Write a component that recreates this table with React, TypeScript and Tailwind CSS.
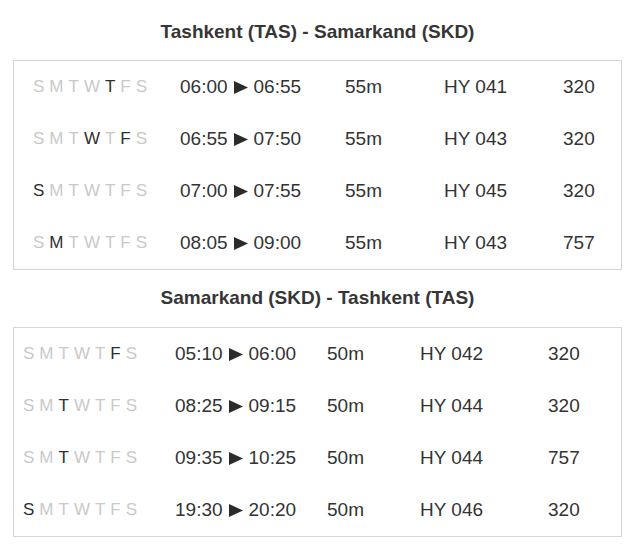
import React from "react";

type Row = { days: boolean[]; dep: string; arr: string; dur: string; flight: string; ac: string };

const DAYS = ["S", "M", "T", "W", "T", "F", "S"];

const mk = (s: string) => DAYS.map((_, i) => s.includes(String(i)));

const out: Row[] = [
  { days: mk("4"), dep: "06:00", arr: "06:55", dur: "55m", flight: "HY 041", ac: "320" },
  { days: mk("35"), dep: "06:55", arr: "07:50", dur: "55m", flight: "HY 043", ac: "320" },
  { days: mk("0"), dep: "07:00", arr: "07:55", dur: "55m", flight: "HY 045", ac: "320" },
  { days: mk("1"), dep: "08:05", arr: "09:00", dur: "55m", flight: "HY 043", ac: "757" },
];

const back: Row[] = [
  { days: mk("5"), dep: "05:10", arr: "06:00", dur: "50m", flight: "HY 042", ac: "320" },
  { days: mk("2"), dep: "08:25", arr: "09:15", dur: "50m", flight: "HY 044", ac: "320" },
  { days: mk("2"), dep: "09:35", arr: "10:25", dur: "50m", flight: "HY 044", ac: "757" },
  { days: mk("0"), dep: "19:30", arr: "20:20", dur: "50m", flight: "HY 046", ac: "320" },
];

function Days({ days }: { days: boolean[] }) {
  return (
    <div className="flex gap-[5px] text-[17px]">
      {DAYS.map((d, i) => (
        <span key={i} className={days[i] ? "text-[#2e2e2e]" : "text-[#c9c9c9]"}>
          {d}
        </span>
      ))}
    </div>
  );
}

function Arrow() {
  return (
    <svg width="14" height="13" viewBox="0 0 14 13" className="mx-[6px] mt-[1px]">
      <polygon points="0,0 14,6.5 0,13" fill="#2b2b2b" />
    </svg>
  );
}

function Table({ rows, cols, pl }: { rows: Row[]; cols: string; pl: string }) {
  return (
    <div className={`mx-[13px] w-[609px] border border-[#d4d4d4] ${pl}`}>
      {rows.map((r, i) => (
        <div key={i} className={`grid ${cols} h-[52px] items-center text-[19px] text-[#333333]`}>
          <Days days={r.days} />
          <div className="flex items-center">
            <span>{r.dep}</span>
            <Arrow />
            <span>{r.arr}</span>
          </div>
          <div>{r.dur}</div>
          <div>{r.flight}</div>
          <div>{r.ac}</div>
        </div>
      ))}
    </div>
  );
}

export default function App() {
  return (
    <div className="w-[635px] h-[552px] bg-white font-['Liberation_Sans',Arial,sans-serif] pt-[20px]">
      <div className="h-[24px] leading-[24px] text-center text-[19px] font-bold text-[#363636]">
        Tashkent (TAS) - Samarkand (SKD)
      </div>
      <div className="h-[16px]" />
      <Table
        rows={out}
        pl="pl-[19px]"
        cols="grid-cols-[147px_165px_99px_119px_1fr]"
      />
      <div className="h-[16px]" />
      <div className="h-[24px] leading-[24px] text-center text-[19px] font-bold text-[#363636]">
        Samarkand (SKD) - Tashkent (TAS)
      </div>
      <div className="h-[17px]" />
      <Table
        rows={back}
        pl="pl-[9px]"
        cols="grid-cols-[152px_152px_93px_128px_1fr]"
      />
    </div>
  );
}
